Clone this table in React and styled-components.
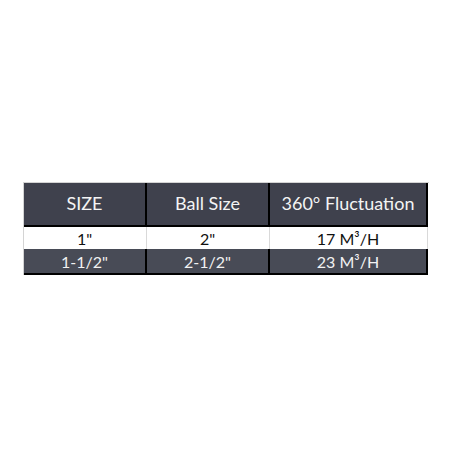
import React from 'react';
import styled, { createGlobalStyle } from 'styled-components';

const GlobalStyle = createGlobalStyle`
  html, body {
    margin: 0;
    padding: 0;
    background: #ffffff;
  }
  body {
    font-family: Lato, "Liberation Sans", sans-serif;
  }
`;

const Page = styled.div`
  width: 450px;
  height: 450px;
  padding: 182px 0 0 23px;
  box-sizing: border-box;
`;

const Grid = styled.div`
  display: grid;
  grid-template-columns: 123px 123px 158px;
  width: 405px;
  border-top: 1px solid #d4d4d4;
  border-left: 1px solid #d4d4d4;
`;

const HeadCell = styled.div`
  box-sizing: border-box;
  height: 44px;
  display: flex;
  align-items: center;
  justify-content: center;
  background: #3f414d;
  color: #f4f4f4;
  font-size: 18px;
  border-right: 2px solid #000;
  border-bottom: 2px solid #000;
  padding-bottom: 2px;
`;

const Cell = styled.div`
  box-sizing: border-box;
  height: ${p => (p.$dark ? '26px' : '22px')};
  display: flex;
  align-items: center;
  justify-content: center;
  font-size: 16px;
  background: ${p => (p.$dark ? '#484b56' : '#ffffff')};
  color: ${p => (p.$dark ? '#f2f2f2' : '#111111')};
  border-right: ${p => (p.$dark ? '2px solid #000' : '1px solid #d9d9d9')};
  border-bottom: ${p => (p.$dark ? '2px solid #000' : 'none')};
  padding-right: ${p => (p.$dark ? '0' : '1px')};
`;

const headers = ['SIZE', 'Ball Size', '360° Fluctuation'];
const rows = [
  ['1"', '2"', '17 M³/H'],
  ['1-1/2"', '2-1/2"', '23 M³/H'],
];

export default function App() {
  return (
    <>
      <GlobalStyle />
      <Page>
        <Grid>
          {headers.map(h => (
            <HeadCell key={h}>{h}</HeadCell>
          ))}
          {rows.map((row, i) =>
            row.map((c, j) => (
              <Cell key={i + '-' + j} $dark={i === 1}>{c}</Cell>
            ))
          )}
        </Grid>
      </Page>
    </>
  );
}
